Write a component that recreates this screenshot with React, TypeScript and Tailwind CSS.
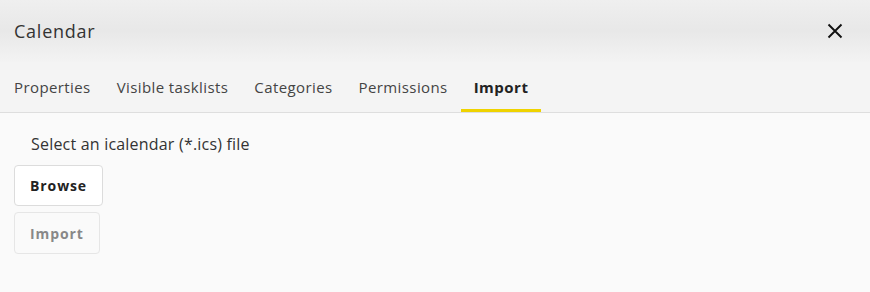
import React from 'react';

const tabs = ['Properties', 'Visible tasklists', 'Categories', 'Permissions', 'Import'];

export default function App() {
  const active = 'Import';

  return (
    <div className="w-[870px] h-[292px] bg-[#fafafa] font-['Open_Sans','Noto_Sans',sans-serif] text-[#333]">
      <div className="bg-[#f4f4f4] border-b border-[#dedede]">
        <div className="h-[62px] flex items-center justify-between pl-[14px] pr-[27px] bg-gradient-to-b from-[#efefef] via-[#e8e8e8] to-[#f3f3f3]">
          <h1 className="text-[18px] text-[#333] tracking-[0.75px]">Calendar</h1>
          <button className="text-[#111]">
            <svg width="16" height="16" viewBox="0 0 16 16" fill="none" stroke="currentColor" strokeWidth="1.9">
              <path d="M1.5 1.5 L14.5 14.5 M14.5 1.5 L1.5 14.5" />
            </svg>
          </button>
        </div>
        <div className="flex h-[50px] pl-[1px]">
          {tabs.map(t => (
            <div
              key={t}
              className={`relative flex items-center text-[15px] ${t === active ? 'px-[13px] font-bold text-[#222] tracking-[0.5px]' : 'px-[13px] text-[#444] tracking-[0.4px]'}`}
            >
              {t}
              {t === active && <span className="absolute left-0 right-0 bottom-0 h-[3px] bg-[#efd300]" />}
            </div>
          ))}
        </div>
      </div>

      <div className="px-[14px] pt-[19px]">
        <p className="pl-[17px] text-[16px] text-[#333] tracking-[0.2px]">Select an icalendar (*.ics) file</p>
        <div className="mt-[9px] flex flex-col items-start gap-[6px]">
          <button className="h-[41px] px-[15px] rounded-[4px] border border-[#dcdcdc] bg-white text-[14px] font-bold text-[#222] tracking-[0.9px]">
            Browse
          </button>
          <button className="h-[42px] px-[15px] rounded-[4px] border border-[#e6e6e6] bg-[#fafafa] text-[14px] font-bold text-[#888] tracking-[0.9px]">
            Import
          </button>
        </div>
      </div>
    </div>
  );
}
